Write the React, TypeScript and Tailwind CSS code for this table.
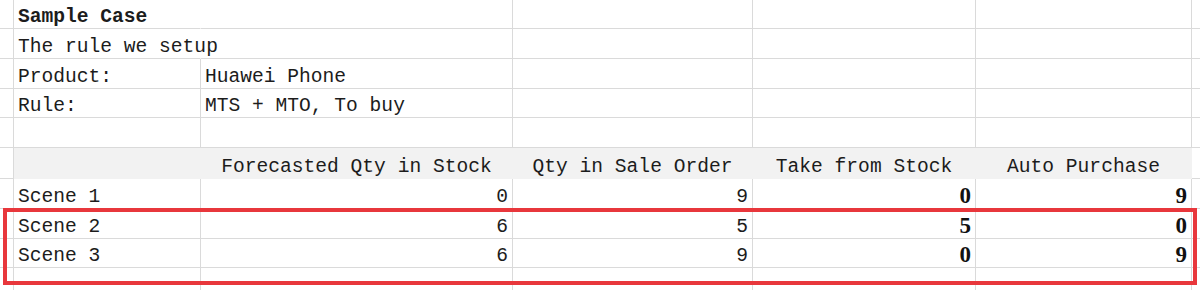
import React from "react";

type C = {
  t?: string;
  align?: "l" | "c" | "r";
  bold?: boolean;
  num?: boolean;
  fill?: boolean;
  noRight?: boolean;
};

const rowH = ["h-[29px]", "h-[30px]", "h-[30px]", "h-[29px]", "h-[30px]", "h-[31px]", "h-[30px]", "h-[30px]", "h-[29px]", "h-[30px]"];

const rows: C[][] = [
  [{ t: "Sample Case", bold: true, noRight: true }, {}, {}, {}, {}],
  [{ t: "The rule we setup", noRight: true }, {}, {}, {}, {}],
  [{ t: "Product:" }, { t: "Huawei Phone" }, {}, {}, {}],
  [{ t: "Rule:" }, { t: "MTS + MTO, To buy" }, {}, {}, {}],
  [{}, {}, {}, {}, {}],
  [
    { fill: true },
    { t: "Forecasted Qty in Stock", align: "c", fill: true },
    { t: "Qty in Sale Order", align: "c", fill: true },
    { t: "Take from Stock", align: "c", fill: true },
    { t: "Auto Purchase", align: "c", fill: true },
  ],
  [{ t: "Scene 1" }, { t: "0", align: "r" }, { t: "9", align: "r" }, { t: "0", align: "r", num: true }, { t: "9", align: "r", num: true }],
  [{ t: "Scene 2" }, { t: "6", align: "r" }, { t: "5", align: "r" }, { t: "5", align: "r", num: true }, { t: "0", align: "r", num: true }],
  [{ t: "Scene 3" }, { t: "6", align: "r" }, { t: "9", align: "r" }, { t: "0", align: "r", num: true }, { t: "9", align: "r", num: true }],
  [{}, {}, {}, {}, {}],
];

function Cell({ c }: { c: C }) {
  const justify = c.align === "c" ? "justify-center" : c.align === "r" ? "justify-end" : "justify-start";
  return (
    <div
      className={`relative flex items-end ${justify} px-[4px] whitespace-nowrap ${
        c.fill ? "bg-[#f2f2f2] border-b border-r border-[#f2f2f2]" : `border-b border-[#dadada] ${c.noRight ? "border-r-transparent border-r" : "border-r"}`
      }`}
    >
      {c.t && (
        <span
          className={
            c.num
              ? "font-['Liberation_Serif',serif] font-bold text-[23px] leading-[24px] text-[#111]"
              : `font-['Liberation_Mono',monospace] text-[19.6px] leading-[22px] text-[#1c1c1c] ${c.bold ? "font-bold" : ""}`
          }
        >
          {c.t}
        </span>
      )}
    </div>
  );
}

export default function App() {
  return (
    <div className="relative w-[1200px] h-[290px] overflow-hidden bg-white">
      <div className="grid grid-cols-[14px_187px_312px_240px_223px_216px_8px]">
        {rows.map((r, i) => (
          <React.Fragment key={i}>
            <div className={`${rowH[i]} border-b border-r border-[#dadada]`} />
            {r.map((c, j) => (
              <Cell key={j} c={c} />
            ))}
            <div className="border-b border-[#dadada]" />
          </React.Fragment>
        ))}
      </div>
      {/* highlight box around scene 2 and 3 */}
      <div className="absolute left-[3px] top-[208px] w-[1194px] h-[77px] border-[4px] border-[#e8373c]" />
    </div>
  );
}
